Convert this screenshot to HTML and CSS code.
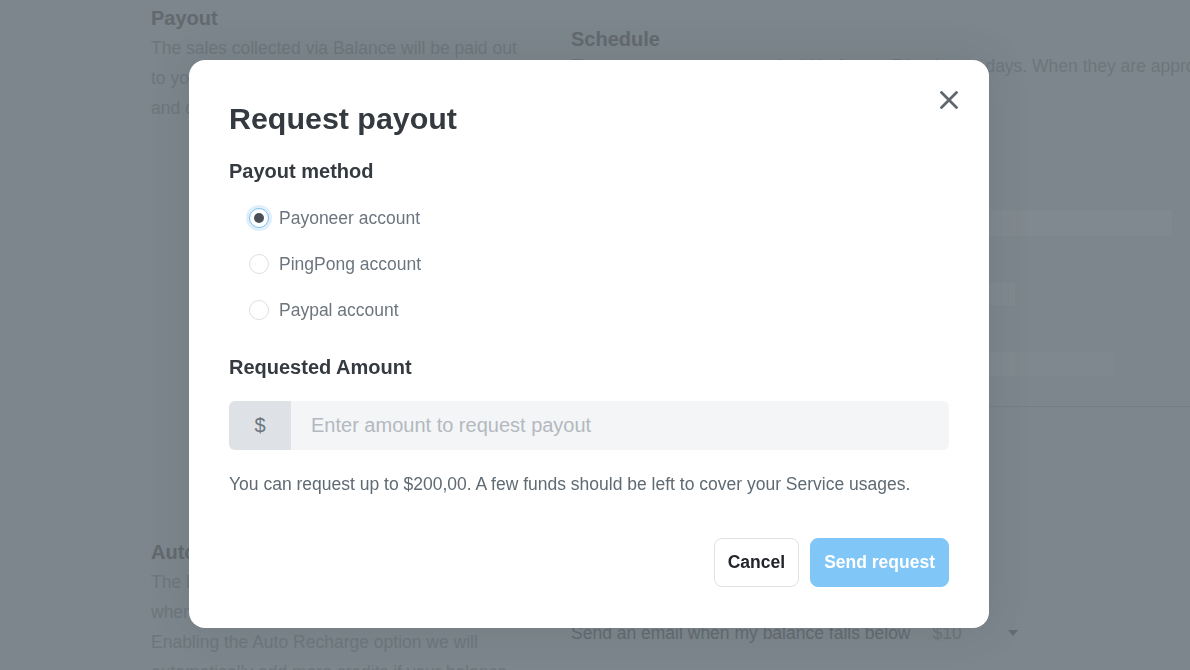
FILE: index.html
```html
<!DOCTYPE html>
<html lang="en">
<head>
<meta charset="utf-8">
<title>Request payout</title>
<link rel="stylesheet" href="styles.css">
</head>
<body>
<div class="page">
  <div class="col col-left">
    <section class="sec">
      <h2 class="sec-title">Payout</h2>
      <p class="sec-text">The sales collected via Balance will be paid out<br>to your Payoneer, PingPong or Paypal account<br>and can be requested at any time.</p>
    </section>
    <section class="sec sec-auto">
      <h2 class="sec-title">Auto Recharge</h2>
      <p class="sec-text">The balance is used for your Service usages<br>when customers make purchases.<br>Enabling the Auto Recharge option we will<br>automatically add more credits if your balance</p>
    </section>
  </div>
  <div class="col col-right">
    <section class="sec sec-schedule">
      <h2 class="sec-title">Schedule</h2>
      <p class="sec-text nowrap">The payouts are processed within four to 7 business&nbsp; days. When they are approved, the funds are sent to your account.</p>
    </section>
    <div class="field field-a"></div>
    <div class="field field-b"></div>
    <div class="field field-c"></div>
    <div class="rule"></div>
    <div class="email-row">
      <span class="email-text">Send an email when my balance falls below</span>
      <span class="select"><span class="select-val">$10</span><span class="caret"></span></span>
    </div>
  </div>
</div>

<div class="overlay">
  <div class="modal">
    <button class="close" aria-label="Close">
      <svg width="18" height="18" viewBox="0 0 18 18"><path d="M1.5 1.5 L16.5 16.5 M16.5 1.5 L1.5 16.5" stroke="#5f676e" stroke-width="2.8" stroke-linecap="round" fill="none"/></svg>
    </button>
    <h1 class="modal-title">Request payout</h1>
    <h3 class="label">Payout method</h3>
    <div class="radios">
      <label class="radio"><span class="dot checked"></span><span class="radio-text">Payoneer account</span></label>
      <label class="radio"><span class="dot"></span><span class="radio-text">PingPong account</span></label>
      <label class="radio"><span class="dot"></span><span class="radio-text">Paypal account</span></label>
    </div>
    <h3 class="label label-amount">Requested Amount</h3>
    <div class="input-group">
      <span class="prefix">$</span>
      <span class="input">Enter amount to request payout</span>
    </div>
    <p class="help">You can request up to $200,00. A few funds should be left to cover your Service usages.</p>
    <div class="actions">
      <button class="btn btn-cancel">Cancel</button>
      <button class="btn btn-send">Send request</button>
    </div>
  </div>
</div>
</body>
</html>
```

FILE: styles.css
```css
html, body {
  margin: 0;
  padding: 0;
  overflow: hidden;
  height: 100%;
}
body {
  background: #7c868c;
  font-family: "Liberation Sans", Arial, sans-serif;
}
.page {
  display: flex;
  gap: 50px;
  padding-left: 151px;
  height: 670px;
}
.col-left {
  width: 370px;
  flex: none;
}
.col-right {
  flex: 1;
  min-width: 0;
  padding-top: 24px;
}
.sec-title {
  margin: 0;
  font-size: 20px;
  line-height: 30px;
  font-weight: bold;
  color: #62696f;
}
.sec-text {
  margin: 0;
  font-size: 17.5px;
  line-height: 30px;
  color: #6d767c;
}
.col-left .sec:first-child {
  padding-top: 3px;
}
.sec-auto {
  margin-top: 414px;
}
.sec-schedule .sec-text {
  margin-top: -3px;
}
.nowrap {
  white-space: nowrap;
}
.field {
  background: #80898f;
}
.field-a {
  margin-top: 129px;
  height: 26px;
  width: 601px;
}
.field-b {
  margin-top: 47px;
  height: 22px;
  width: 444px;
}
.field-c {
  margin-top: 47px;
  height: 24px;
  width: 544px;
  background: linear-gradient(to right, #80898f 0 444px, #7e888e 444px);
}
.rule {
  margin-top: 30px;
  height: 1px;
  background: #747e84;
  width: 700px;
}
.email-row {
  margin-top: 211px;
  display: flex;
  align-items: center;
  height: 30px;
}
.email-text {
  font-size: 17.5px;
  color: #626a70;
  white-space: nowrap;
}
.select {
  margin-left: 22px;
  width: 85px;
  display: flex;
  align-items: center;
  justify-content: space-between;
  font-size: 17.5px;
  color: #6b747a;
}
.caret {
  width: 0;
  height: 0;
  border-left: 5px solid transparent;
  border-right: 5px solid transparent;
  border-top: 6px solid #656d73;
}

/* overlay + modal */
.overlay {
  position: fixed;
  inset: 0;
  padding: 60px 0 0 189px;
}
.modal {
  position: relative;
  box-sizing: border-box;
  width: 800px;
  height: 568px;
  background: #fff;
  border-radius: 16px;
  padding: 40px 40px 41px;
  box-shadow: 0 0 40px rgba(60, 70, 80, 0.15);
}
.close {
  position: absolute;
  top: 31px;
  right: 31px;
  width: 18px;
  height: 18px;
  padding: 0;
  border: 0;
  background: none;
  display: flex;
}
.modal-title {
  margin: 0;
  font-size: 30.4px;
  line-height: 36px;
  font-weight: bold;
  color: #343a40;
}
.label {
  margin: 23px 0 0;
  font-size: 20px;
  line-height: 24px;
  font-weight: bold;
  color: #343a40;
}
.label-amount {
  margin-top: 22px;
}
.radios {
  margin-top: 12px;
  padding-left: 20px;
  display: flex;
  flex-direction: column;
}
.radio {
  height: 46px;
  display: flex;
  align-items: center;
  gap: 10px;
}
.dot {
  box-sizing: border-box;
  width: 20px;
  height: 20px;
  border-radius: 50%;
  border: 1px solid #dcdfe3;
  background: #fff;
  display: flex;
  align-items: center;
  justify-content: center;
}
.dot.checked {
  border: 1.5px solid #7cc0ef;
  box-shadow: 0 0 0 3px rgba(128, 196, 245, 0.25);
}
.dot.checked::after {
  content: "";
  width: 10px;
  height: 10px;
  border-radius: 50%;
  background: #495057;
}
.radio-text {
  font-size: 17.5px;
  color: #6c757d;
}
.input-group {
  margin-top: 22px;
  height: 49px;
  display: flex;
  border-radius: 6px;
  overflow: hidden;
}
.prefix {
  width: 62px;
  flex: none;
  background: #dee2e6;
  color: #6c757d;
  font-size: 20px;
  display: flex;
  align-items: center;
  justify-content: center;
}
.input {
  flex: 1;
  background: #f4f5f7;
  color: #b3b9bf;
  font-size: 20px;
  display: flex;
  align-items: center;
  padding-left: 20px;
}
.help {
  margin: 22px 0 0;
  font-size: 17.5px;
  line-height: 24px;
  color: #5f6a73;
}
.actions {
  margin-top: 42px;
  display: flex;
  justify-content: flex-end;
  gap: 11px;
}
.btn {
  height: 49px;
  padding: 0 13px;
  border-radius: 8px;
  font-family: "Liberation Sans", Arial, sans-serif;
  font-size: 17.5px;
  font-weight: bold;
}
.btn-cancel {
  background: #fff;
  border: 1px solid #dee2e6;
  color: #212529;
}
.btn-send {
  background: #80c6f6;
  border: 1px solid #80c6f6;
  color: #fff;
}
```
